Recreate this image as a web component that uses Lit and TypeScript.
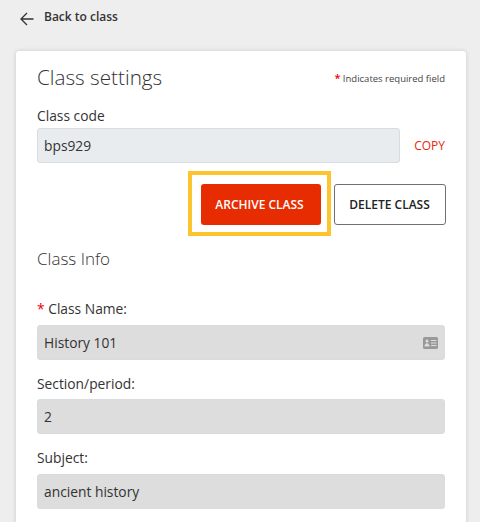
import { LitElement, html, css } from "lit";
import { customElement } from "lit/decorators.js";

@customElement("app-root")
export class AppRoot extends LitElement {
  static styles = css`
    :host {
      display: block;
      width: 480px;
      height: 522px;
      overflow: hidden;
      background: #eeeeee;
      font-family: "Open Sans", sans-serif;
      color: #333;
      -webkit-font-smoothing: antialiased;
    }
    .back {
      display: flex;
      align-items: center;
      gap: 10px;
      height: 17px;
      padding: 8px 0 1px 20px;
      font-size: 12px;
      font-weight: 600;
      color: #333;
    }
    .back svg { display: block; width: 14px; height: 14px; margin-top: 4px; }
    .card {
      box-sizing: border-box;
      width: 450px;
      height: 520px;
      margin: 25px 0 0 16px;
      padding: 11px 21px 0;
      background: #fff;
      border-radius: 3px;
      box-shadow: 0 0 4px rgba(0, 0, 0, 0.16);
    }
    .head {
      display: flex;
      justify-content: space-between;
      align-items: center;
      height: 30px;
    }
    h1 {
      margin: 0;
      font-size: 20.7px;
      font-weight: 300;
      line-height: 30px;
      color: #333;
    }
    .req { font-size: 9.5px; color: #444; }
    .star { color: #f00000; }
    .req .star { font-size: 11px; font-weight: 600; }
    .lbl {
      font-size: 13.8px;
      line-height: 20px;
      color: #333;
    }
    .code-lbl { margin-top: 14px; height: 20px; }
    .code-row {
      display: flex;
      align-items: center;
      justify-content: space-between;
      margin-top: 2px;
    }
    .input {
      box-sizing: border-box;
      display: flex;
      align-items: center;
      justify-content: space-between;
      height: 35px;
      padding: 0 6px;
      border: 1px solid #d8dcdf;
      border-radius: 3px;
      font-size: 13.8px;
      color: #333;
      background: #dddddd;
    }
    .code { width: 363px; background: #e9ecef; }
    .copy { font-size: 12px; color: #e8280c; }
    .btns {
      display: flex;
      justify-content: flex-end;
      align-items: center;
      gap: 3px;
      margin-top: 8px;
    }
    .hl {
      box-sizing: border-box;
      width: 143px;
      height: 65px;
      padding: 9px;
      border: 4px solid #fcc52e;
    }
    .btn {
      box-sizing: border-box;
      display: flex;
      align-items: center;
      justify-content: center;
      height: 41px;
      border-radius: 3px;
      font-size: 12px;
      font-weight: 600;
    }
    .archive {
      width: 120px;
      padding-right: 3px;
      background: #e62c00;
      color: #fff;
    }
    .delete {
      width: 112px;
      margin: 2px -1px 0 0;
      padding-right: 1px;
      background: #fff;
      color: #222;
      border: 1px solid #707070;
    }
    h2 {
      margin: 12px 0 0;
      font-size: 17px;
      font-weight: 300;
      line-height: 22px;
      color: #333;
    }
    .field .lbl { height: 20px; margin-bottom: 6px; }
    .f1 { margin-top: 29px; }
    .f2 { margin-top: 14px; }
    .f2 .lbl { margin-bottom: 5px; }
    .f3 { margin-top: 14px; }
    .input svg { display: block; width: 15px; height: 12px; }
  `;

  render() {
    return html`
      <div class="back">
        <svg viewBox="0 0 14 14" fill="none" stroke="#333" stroke-width="1.3">
          <path d="M13.5 7H1M7 1 1 7l6 6" />
        </svg>
        <span>Back to class</span>
      </div>
      <div class="card">
        <div class="head">
          <h1>Class settings</h1>
          <span class="req"><span class="star">*</span> Indicates required field</span>
        </div>
        <div class="lbl code-lbl">Class code</div>
        <div class="code-row">
          <div class="input code">bps929</div>
          <span class="copy">COPY</span>
        </div>
        <div class="btns">
          <div class="hl"><div class="btn archive">ARCHIVE CLASS</div></div>
          <div class="btn delete">DELETE CLASS</div>
        </div>
        <h2>Class Info</h2>
        <div class="field f1">
          <div class="lbl"><span class="star">*</span> Class Name:</div>
          <div class="input">
            History 101
            <svg viewBox="0 0 15 12">
              <path fill="#999" fill-rule="evenodd" d="M1.5 0h12A1.5 1.5 0 0 1 15 1.500v9a1.500 1.500 0 0 1-1.500 1.500h-12A1.500 1.500 0 0 1 0 10.500v-9A1.500 1.500 0 0 1 1.500 0ZM4 2.500a1.500 1.500 0 1 0 0 3 1.500 1.500 0 0 0 0-3ZM1.500 9.500h5c0-2-1-3.300-2.500-3.300S1.500 7.500 1.500 9.500ZM8 3v1h5.500V3ZM8 5.500v1h5.500v-1ZM8 8v1h5.500V8Z" />
            </svg>
          </div>
        </div>
        <div class="field f2">
          <div class="lbl">Section/period:</div>
          <div class="input">2</div>
        </div>
        <div class="field f3">
          <div class="lbl">Subject:</div>
          <div class="input">ancient history</div>
        </div>
      </div>
    `;
  }
}
